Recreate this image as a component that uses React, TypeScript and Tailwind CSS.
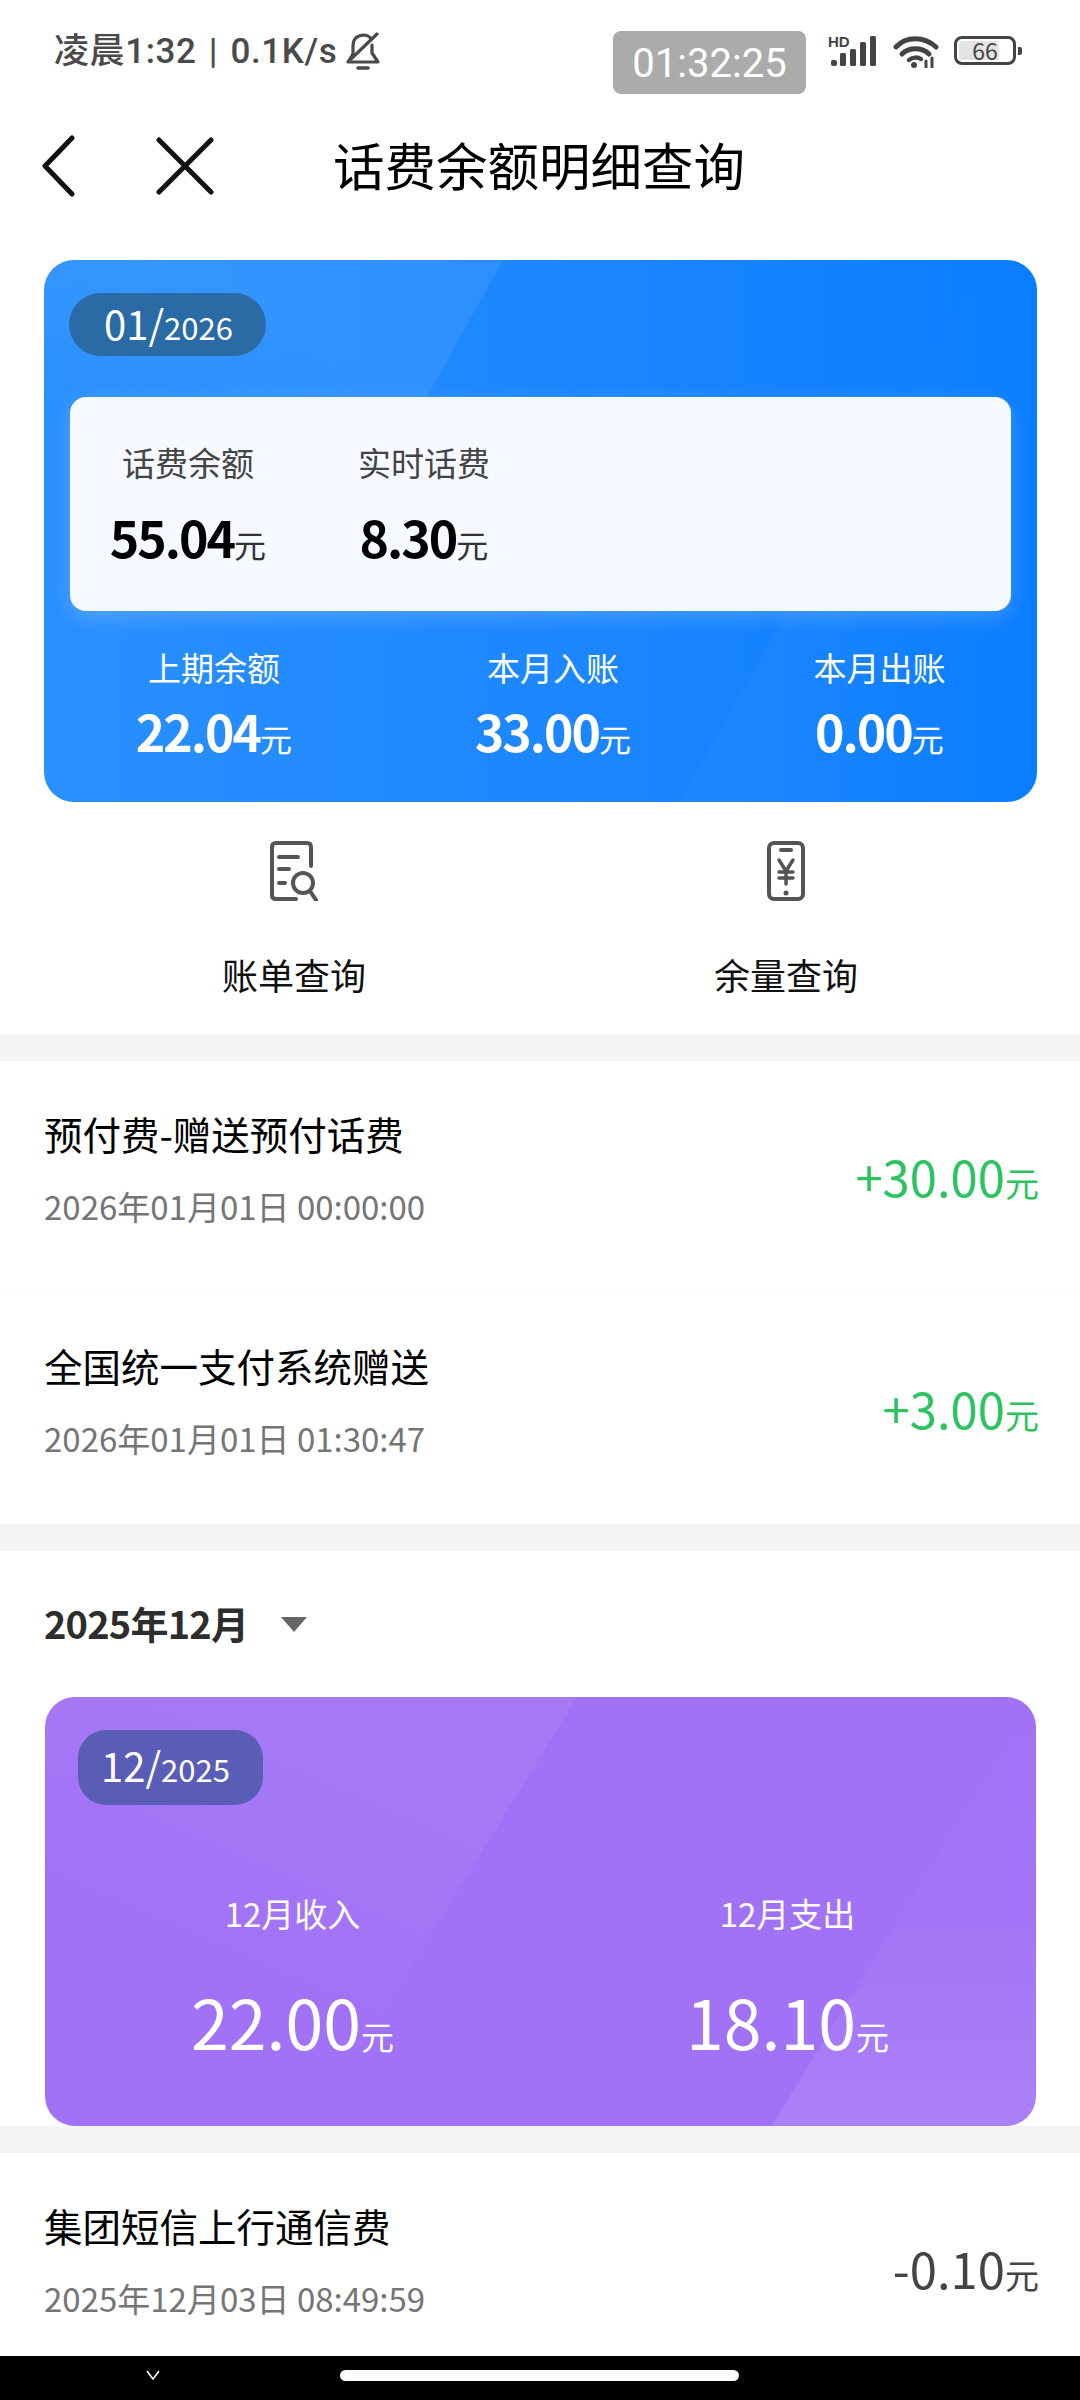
import React from 'react';

const Yuan = ({ className = 'text-[33px]' }: { className?: string }) => <span className={className}>元</span>;

const StatusIcons = () => (
  <div className="flex items-start gap-[15px]">
    {/* signal */}
    <svg width="50" height="40" viewBox="0 -6 50 40" className="-mt-[1px]" fill="#444">
      <text x="0" y="11" fontSize="15" fontWeight="700" fontFamily="'Liberation Sans', sans-serif">HD</text>
      <rect x="3" y="24" width="6" height="6" rx="2" />
      <rect x="12" y="17" width="6" height="13" rx="1.5" />
      <rect x="22" y="13" width="6" height="17" rx="1.5" />
      <rect x="32" y="6" width="6" height="24" rx="1.5" />
      <rect x="42" y="0" width="6" height="30" rx="1.5" />
    </svg>
    {/* wifi */}
    <svg width="46" height="32" viewBox="0 0 46 32" className="mt-[5px]" fill="none" stroke="#444" strokeLinecap="round">
      <path d="M3 11C13 0 31 0 43 11" strokeWidth="5" />
      <path d="M9 18C16 11 29 11 36 18" strokeWidth="5" />
      <path d="M16 24C19 21 25 21 28 23" strokeWidth="4.5" />
      <circle cx="21" cy="29" r="3" fill="#444" stroke="none" />
      <path d="M33 31V25M39 31V22" strokeWidth="3" />
    </svg>
    {/* battery */}
    <div className="flex items-center gap-[2px] mt-[5px]">
      <div className="relative w-[62px] h-[29px] rounded-[8px] border-[3px] border-[#444] flex items-center p-[2px]">
        <div className="w-[40px] h-full bg-[#e4e4e4] rounded-[2px]" />
        <span className="absolute inset-0 flex items-center justify-center text-[23px] leading-none text-[#444]">66</span>
      </div>
      <div className="w-[4px] h-[8px] bg-[#444] rounded-r-[2px]" />
    </div>
  </div>
);

const BellMuted = () => (
  <svg width="36" height="40" viewBox="0 0 36 40" fill="none" stroke="#4a4a4a" strokeWidth="3.2" strokeLinecap="round" strokeLinejoin="round">
    <path d="M27 13V21L33 30H3L8 22V14Q8 4 18 3Q24 3 26 7" />
    <path d="M32 2L6 27" />
    <path d="M13 36H23" strokeWidth="3.6" />
  </svg>
);

const BillIcon = () => (
  <svg width="48" height="60" viewBox="0 0 48 60" fill="none" stroke="#555" strokeWidth="4" strokeLinecap="round">
    <path d="M41 25V6q0-4-4-4H6q-4 0-4 4v48q0 4 4 4h20" />
    <path d="M9 16H28M9 28H19M9 42H15" strokeWidth="4" />
    <circle cx="33" cy="42" r="10" />
    <path d="M40 50L46 59" />
  </svg>
);

const PhoneIcon = () => (
  <svg width="38" height="60" viewBox="0 0 38 60" fill="none" stroke="#555" strokeWidth="4" strokeLinecap="round" strokeLinejoin="round">
    <rect x="2" y="2" width="34" height="56" rx="5" />
    <path d="M14 9H24" />
    <path d="M12 19L19 30L26 19M12 31H26M12 37H26M19 30V43" strokeWidth="3.5" />
    <circle cx="19" cy="52" r="2.5" fill="#555" stroke="none" />
  </svg>
);

type RowProps = { title: string; date: string; amount: string; color: string };

const Row = ({ title, date, amount, color }: RowProps) => (
  <div className="flex justify-between items-start h-[231px] pl-[44px] pr-[41px]">
    <div className="pt-[47px]">
      <div className="h-[50px] leading-[50px] text-[38.5px] text-black">{title}</div>
      <div className="mt-[26px] h-[44px] leading-[44px] text-[33px] text-[#757575]">{date}</div>
    </div>
    <div className={`mt-[81px] h-[68px] leading-[68px] text-[49px] ${color}`}>
      {amount}
      <span className="text-[34px]">元</span>
    </div>
  </div>
);

const Band = () => <div className="h-[27px] bg-[#f4f4f4] shrink-0" />;

const Stat = ({ label, value }: { label: string; value: string }) => (
  <div className="flex flex-col items-center text-white">
    <div className="h-[44px] leading-[44px] text-[33px]">{label}</div>
    <div className="mt-[11px] h-[60px] leading-[60px] text-[50px] font-bold tracking-[-2px]">
      {value}
      <Yuan className="text-[32px] font-normal tracking-normal" />
    </div>
  </div>
);

const Balance = ({ label, value }: { label: string; value: string }) => (
  <div className="flex flex-col items-center">
    <div className="h-[44px] leading-[44px] text-[33px] text-[#444]">{label}</div>
    <div className="mt-[22px] h-[60px] leading-[60px] text-[50px] font-bold text-black tracking-[-2px]">
      {value}
      <Yuan className="text-[32px] font-normal text-[#333] tracking-normal" />
    </div>
  </div>
);

const App = () => {
  return (
    <div className="w-[1080px] h-[2400px] overflow-hidden bg-white flex flex-col font-['Noto_Sans_CJK_SC','Noto_Sans',sans-serif]">
      {/* status bar */}
      <div className="h-[104px] shrink-0 flex justify-between items-start pl-[54px] pr-[58px]">
        <div className="mt-[28px] flex items-center gap-[8px] text-[35px] leading-[48px] text-[#4a4a4a] font-['Roboto','Noto_Sans_CJK_SC',sans-serif] font-medium">
          <span className="tracking-[0.6px] [word-spacing:3px]">凌晨1:32 | 0.1K/s</span>
          <BellMuted />
        </div>
        <div className="flex items-start gap-[22px] mt-[31px]">
          <div className="w-[193px] h-[63px] rounded-[8px] bg-[#ababab] flex items-center justify-center pt-[3px] text-white text-[40px] font-['Roboto',sans-serif]">
            01:32:25
          </div>
          <StatusIcons />
        </div>
      </div>

      {/* nav */}
      <div className="h-[124px] shrink-0 flex items-center pl-[40px]">
        <svg width="36" height="62" viewBox="0 0 36 62" fill="none" stroke="#111" strokeWidth="5" strokeLinecap="round" strokeLinejoin="round">
          <path d="M32 3L5 31L32 59" />
        </svg>
        <svg width="60" height="58" viewBox="0 0 60 58" fill="none" stroke="#111" strokeWidth="5" strokeLinecap="round" className="ml-[79px]">
          <path d="M4 3L56 55M56 3L4 55" />
        </svg>
        <div className="ml-[118px] mb-[5px] text-[51.5px] leading-[60px] text-black">话费余额明细查询</div>
      </div>

      {/* current month */}
      <div className="relative ml-[44px] mt-[32px] w-[993px] h-[542px] shrink-0 rounded-[30px] overflow-hidden bg-gradient-to-r from-[#2a90ff] to-[#0a7dff]">
        <div className="absolute inset-0 bg-[linear-gradient(to_top_right,rgba(255,255,255,0)_36%,rgba(255,255,255,0.07)_56%)] [clip-path:polygon(0_0,46.2%_0,16%_100%,0_100%)]" />
        <div className="absolute inset-0 bg-gradient-to-r from-white/0 via-white/4 to-white/0 [clip-path:polygon(95%_0,100%_0,100%_100%,64%_100%)]" />
        <div className="relative pt-[33px]">
          <div className="ml-[25px] w-[197px] h-[63px] rounded-full bg-[#2a6ba6] text-white flex items-baseline pl-[35px] pt-[7px]">
            <span className="text-[40px] leading-[46px]">01/</span>
            <span className="text-[31px] leading-[46px]">2026</span>
          </div>
          <div className="ml-[26px] mt-[41px] w-[941px] h-[214px] rounded-[16px] bg-[#f6f9ff] shadow-[0_6px_20px_rgba(255,255,255,0.2)] pt-[43px] grid grid-cols-[236px_236px]">
            <Balance label="话费余额" value="55.04" />
            <Balance label="实时话费" value="8.30" />
          </div>
          <div className="mt-[34px] grid grid-cols-[340px_338px_315px]">
            <Stat label="上期余额" value="22.04" />
            <Stat label="本月入账" value="33.00" />
            <Stat label="本月出账" value="0.00" />
          </div>
        </div>
      </div>

      {/* shortcuts */}
      <div className="h-[232px] shrink-0 px-[48px] pt-[39px] grid grid-cols-2">
        <div className="flex flex-col items-center">
          <BillIcon />
          <div className="mt-[48px] h-[50px] leading-[50px] text-[36px] text-[#111]">账单查询</div>
        </div>
        <div className="flex flex-col items-center">
          <PhoneIcon />
          <div className="mt-[48px] h-[50px] leading-[50px] text-[36px] text-[#111]">余量查询</div>
        </div>
      </div>

      <Band />
      <div className="border-b border-[#f8f8f8]">
        <Row title="预付费-赠送预付话费" date="2026年01月01日 00:00:00" amount="+30.00" color="text-[#2cc45e]" />
      </div>
      <Row title="全国统一支付系统赠送" date="2026年01月01日 01:30:47" amount="+3.00" color="text-[#2cc45e]" />
      <Band />

      {/* december */}
      <div className="h-[146px] shrink-0 pl-[44px] flex items-center">
        <span className="text-[38px] leading-[50px] mb-[2px] font-bold text-[#2d2d2d] tracking-[-0.8px]">2025年12月</span>
        <div className="ml-[33px] w-0 h-0 border-x-[13px] border-x-transparent border-t-[15px] border-t-[#666]" />
      </div>

      <div className="relative ml-[45px] w-[991px] h-[429px] shrink-0 rounded-[30px] overflow-hidden bg-[#a172f6]">
        <div className="absolute inset-0 bg-[linear-gradient(to_top_right,rgba(255,255,255,0)_28%,rgba(255,255,255,0.055)_58%)] [clip-path:polygon(0_0,53.7%_0,27%_100%,0_100%)]" />
        <div className="absolute inset-0 bg-gradient-to-b from-white/0 via-white/2 to-white/10 [clip-path:polygon(100%_0,73.3%_100%,100%_100%)]" />
        <div className="relative pt-[33px]">
          <div className="ml-[33px] w-[185px] h-[75px] rounded-[28px] bg-[#5a5db5] text-white flex items-baseline pl-[23px] pt-[12px]">
            <span className="text-[40px] leading-[46px]">12/</span>
            <span className="text-[31px] leading-[46px]">2025</span>
          </div>
          <div className="mt-[86px] grid grid-cols-[495px_495px] text-white">
            <div className="flex flex-col items-center">
              <div className="h-[44px] leading-[44px] text-[33px]">12月收入</div>
              <div className="mt-[41px] h-[90px] leading-[90px] text-[68px]">
                22.00<Yuan />
              </div>
            </div>
            <div className="flex flex-col items-center">
              <div className="h-[44px] leading-[44px] text-[33px]">12月支出</div>
              <div className="mt-[41px] h-[90px] leading-[90px] text-[68px]">
                18.10<Yuan />
              </div>
            </div>
          </div>
        </div>
      </div>

      <Band />
      <div className="h-[203px] shrink-0 overflow-hidden">
        <Row title="集团短信上行通信费" date="2025年12月03日 08:49:59" amount="-0.10" color="text-[#444]" />
      </div>

      {/* system nav */}
      <div className="h-[44px] shrink-0 bg-black flex items-start pl-[146px]">
        <svg width="14" height="10" viewBox="0 0 14 10" fill="none" stroke="#fff" strokeWidth="1.6" className="mt-[14px]">
          <path d="M1 1L7 9L13 1" />
        </svg>
        <div className="ml-[180px] mt-[14px] w-[399px] h-[11px] rounded-full bg-white" />
      </div>
    </div>
  );
};

export default App;
